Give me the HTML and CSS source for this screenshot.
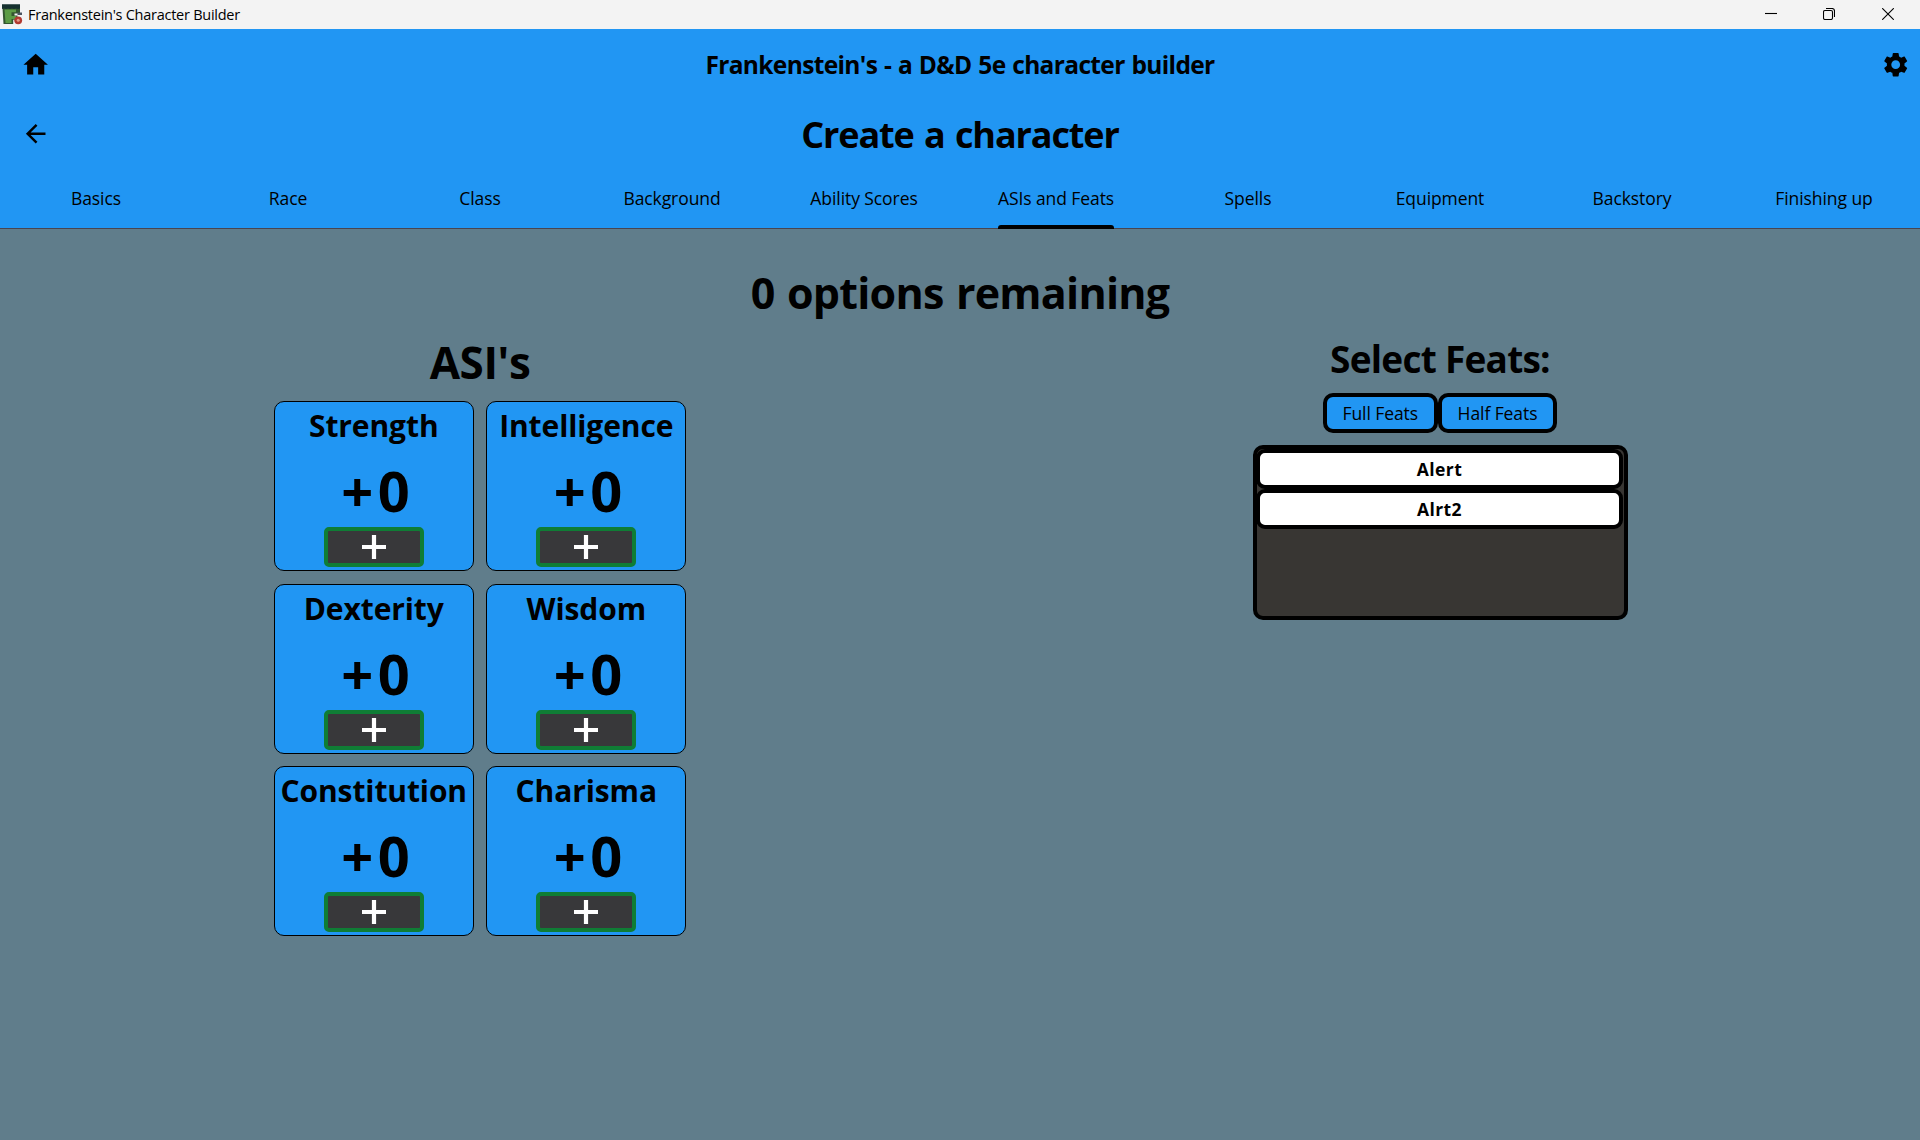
FILE: index.html
```html
<!DOCTYPE html>
<html lang="en">
<head>
<meta charset="utf-8">
<title>Frankenstein's Character Builder</title>
<link rel="stylesheet" href="styles.css">
</head>
<body>
<svg class="defs" width="0" height="0" aria-hidden="true">
  <symbol id="plus" viewBox="0 0 24 24"><path d="M0 9.900h9.900V0h4.200v9.900H24v4.200h-9.900V24H9.900v-9.900H0z"/></symbol>
</svg>

<div class="window-bar">
  <svg class="logo" width="21" height="21" viewBox="0 0 21 21">
    <path fill="#33552f" d="M.5 4h17.500v5.500h-5.500v2H15.500v4.300h-4.300V20H1.500z"/>
    <path fill="#5c9c45" d="M2.500 5.500H14v2.700H9.500v3.800h4.800v3H9.500v4H3.500z"/>
    <path fill="#15302f" d="M0 .2h18v4.300l-2 .6-2-.6-2 .6-2-.6-2 .6-2-.6-2 .6-2-.6-2 .6z"/>
    <path fill="#4b5560" d="M15.500 8.500h4.500v2.500h-4.500z"/>
    <circle cx="16.200" cy="16.300" r="3.900" fill="#b23a30"/>
    <circle cx="16.200" cy="16.300" r="1.500" fill="#e59a86"/>
  </svg>
  <span class="window-title">Frankenstein's Character Builder</span>
  <div class="window-controls">
    <svg width="12" height="12" viewBox="0 0 12 12"><path d="M0 5.500h12"/></svg>
    <svg width="12" height="12" viewBox="0 0 12 12"><rect x=".5" y="2.500" width="9" height="9" rx="1.500"/><path d="M3 .5h6a2.500 2.500 0 0 1 2.500 2.500v6"/></svg>
    <svg width="12" height="12" viewBox="0 0 12 12"><path d="M.2.2l11.600 11.600M11.800.2L.2 11.800"/></svg>
  </div>
</div>

<header class="header">
  <div class="bar bar-app">
    <svg class="icon" viewBox="0 0 24 24"><path d="M10 20v-6h4v6h5v-8h3L12 3 2 12h3v8z"/></svg>
    <h2 class="app-title">Frankenstein's - a D&amp;D 5e character builder</h2>
    <svg class="icon" viewBox="0 0 24 24"><path d="M19.140 12.940c.04-.3.06-.61.06-.94 0-.32-.02-.64-.07-.94l2.030-1.580c.18-.14.23-.41.12-.61l-1.920-3.320c-.12-.22-.37-.29-.59-.22l-2.390.96c-.5-.38-1.030-.7-1.620-.94l-.36-2.540c-.04-.24-.24-.41-.48-.41h-3.840c-.24 0-.43.17-.47.41l-.36 2.540c-.59.24-1.130.57-1.620.94l-2.390-.96c-.22-.08-.47 0-.59.22L2.740 8.870c-.12.21-.08.47.12.61l2.030 1.580c-.05.3-.09.63-.09.94s.02.64.07.94l-2.030 1.580c-.18.14-.23.41-.12.61l1.920 3.320c.12.22.37.29.59.22l2.390-.96c.5.38 1.030.7 1.620.94l.36 2.540c.05.24.24.41.48.41h3.840c.24 0 .44-.17.47-.41l.36-2.540c.59-.24 1.130-.56 1.620-.94l2.390.96c.22.08.47 0 .59-.22l1.920-3.320c.12-.22.07-.47-.12-.61l-2.010-1.580zM12 15.600c-1.980 0-3.600-1.620-3.600-3.600s1.620-3.600 3.600-3.600 3.600 1.620 3.600 3.600-1.620 3.600-3.600 3.600z"/></svg>
  </div>
  <div class="bar bar-page">
    <svg class="icon" viewBox="0 0 24 24"><path d="M20 11H7.830l5.590-5.590L12 4l-8 8 8 8 1.410-1.410L7.830 13H20z"/></svg>
    <h1 class="page-title">Create a character</h1>
  </div>
  <nav class="tabs">
    <span class="tab">Basics</span>
    <span class="tab">Race</span>
    <span class="tab">Class</span>
    <span class="tab">Background</span>
    <span class="tab">Ability Scores</span>
    <span class="tab tab-active">ASIs and Feats</span>
    <span class="tab">Spells</span>
    <span class="tab">Equipment</span>
    <span class="tab">Backstory</span>
    <span class="tab">Finishing up</span>
  </nav>
</header>

<main class="content">
  <h2 class="remaining">0 options remaining</h2>
  <div class="columns">
    <section class="asi">
      <h2 class="asi-title">ASI's</h2>
      <div class="cards">
        <div class="card"><h3 class="name">Strength</h3><div class="value">+0</div><button class="add"><svg width="24" height="24"><use href="#plus"/></svg></button></div>
        <div class="card"><h3 class="name">Intelligence</h3><div class="value">+0</div><button class="add"><svg width="24" height="24"><use href="#plus"/></svg></button></div>
        <div class="card"><h3 class="name">Dexterity</h3><div class="value">+0</div><button class="add"><svg width="24" height="24"><use href="#plus"/></svg></button></div>
        <div class="card"><h3 class="name">Wisdom</h3><div class="value">+0</div><button class="add"><svg width="24" height="24"><use href="#plus"/></svg></button></div>
        <div class="card"><h3 class="name">Constitution</h3><div class="value">+0</div><button class="add"><svg width="24" height="24"><use href="#plus"/></svg></button></div>
        <div class="card"><h3 class="name">Charisma</h3><div class="value">+0</div><button class="add"><svg width="24" height="24"><use href="#plus"/></svg></button></div>
      </div>
    </section>
    <section class="feats">
      <h2 class="feats-title">Select Feats:</h2>
      <div class="filters">
        <button class="filter filter-full">Full Feats</button>
        <button class="filter filter-half">Half Feats</button>
      </div>
      <div class="feat-list">
        <button class="feat">Alert</button>
        <button class="feat">Alrt2</button>
      </div>
    </section>
  </div>
</main>
</body>
</html>
```
FILE: styles.css
```css
* { box-sizing: border-box; }

body {
  margin: 0;
  height: 1140px;
  display: flex;
  flex-direction: column;
  background: #607d8b;
  color: #000;
  font-family: "Open Sans", "Noto Sans", sans-serif;
  overflow: hidden;
}

h1, h2, h3 { margin: 0; font-weight: 700; white-space: nowrap; }

button {
  margin: 0;
  padding: 0;
  font-family: inherit;
  color: inherit;
}

.defs { position: absolute; }

/* Window frame */
.window-bar {
  height: 29px;
  flex: none;
  display: flex;
  align-items: center;
  padding: 0 26px 0 2px;
  background: #f3f3f3;
}
.logo { margin-top: -1px; }
.window-title {
  margin-left: 5px;
  font-size: 14.5px;
  line-height: 29px;
  letter-spacing: -0.26px;
}
.window-controls {
  margin: -1px 0 0 auto;
  display: flex;
  gap: 47px;
}
.window-controls svg {
  display: block;
  fill: none;
  stroke: #000;
  stroke-width: 1.1;
}
.window-controls svg:nth-child(2) { margin-left: -1px; }

/* Header */
.header {
  height: 200px;
  flex: none;
  background: #2196f3;
  border-bottom: 1px solid #49454f;
}
.bar {
  display: grid;
  grid-template-columns: 30px 1fr 30px;
  align-items: center;
  padding: 0 9.5px 0 20.5px;
  text-align: center;
}
.bar-app { height: 71px; }
.bar-page { height: 68px; }
.icon { width: 29.4px; height: 29.4px; display: block; }
.bar-app .icon { margin-top: -1.5px; }
.app-title {
  margin-left: -11px;
  font-size: 24.5px;
  line-height: 72px;
  letter-spacing: -0.64px;
  word-spacing: 1px;
}
.page-title {
  margin-left: -11px;
  padding-top: 2px;
  font-size: 36px;
  line-height: 68px;
  letter-spacing: -1.1px;
  word-spacing: 2px;
}
.bar-page { height: 68px; align-content: center; }
.tabs {
  height: 61px;
  display: grid;
  grid-template-columns: repeat(10, 1fr);
  justify-items: center;
}
.tab {
  height: 61px;
  font-size: 17.5px;
  font-weight: 500;
  line-height: 61px;
  letter-spacing: -0.08px;
  white-space: nowrap;
}
.tab-active { position: relative; }
.tab-active::after {
  content: "";
  position: absolute;
  left: 0;
  right: 0;
  bottom: 0;
  height: 4px;
  border-radius: 3px 3px 0 0;
  background: #000;
}

/* Content */
.content { flex: 1; padding-top: 31px; text-align: center; }
.remaining {
  font-size: 43px;
  line-height: 66px;
  letter-spacing: -0.75px;
  word-spacing: 2px;
}
.columns { display: grid; grid-template-columns: repeat(2, 1fr); }

.asi { padding: 6px 0 0; }
.asi-title { font-size: 44px; line-height: 61px; letter-spacing: -0.4px; }
.cards {
  margin-top: 8.4px;
  display: grid;
  grid-template-columns: repeat(2, 200px);
  justify-content: center;
  gap: 12.5px;
}
.card {
  height: 170px;
  display: flex;
  flex-direction: column;
  align-items: center;
  border: 1px solid #000;
  border-radius: 10px;
  background: #2196f3;
}
.name { font-size: 30px; line-height: 48px; letter-spacing: -0.1px; }
.value {
  height: 77px;
  padding-left: 8px;
  font-size: 56px;
  font-weight: 700;
  line-height: 81px;
  letter-spacing: 4.4px;
}
.add {
  width: 100px;
  height: 40px;
  display: flex;
  align-items: center;
  justify-content: center;
  border: 4px solid #0f7d35;
  border-radius: 5px;
  background: #38383a;
  fill: #fff;
}

.feats {
  display: flex;
  flex-direction: column;
  align-items: center;
  padding-top: 6px;
}
.feats-title { font-size: 37px; line-height: 53px; letter-spacing: -0.75px; }
.filters { display: flex; margin-top: 7.6px; }
.filter {
  height: 40px;
  border: 4px solid #000;
  border-radius: 10px;
  background: #2196f3;
  font-size: 17.5px;
  font-weight: 500;
  line-height: 33px;
  letter-spacing: -0.08px;
}
.filter-full { width: 115px; }
.filter-half { width: 119.5px; }
.feat-list {
  width: 375px;
  height: 175px;
  margin-top: 12.7px;
  display: flex;
  flex-direction: column;
  border: 4px solid #000;
  border-radius: 10px;
  background: #383633;
}
.feat {
  height: 40px;
  margin: 0 .5px 0 -.5px;
  border: 4px solid #000;
  border-radius: 9px;
  background: #fff;
  font-size: 17.5px;
  font-weight: 700;
  line-height: 33px;
  letter-spacing: 0.4px;
}
```
